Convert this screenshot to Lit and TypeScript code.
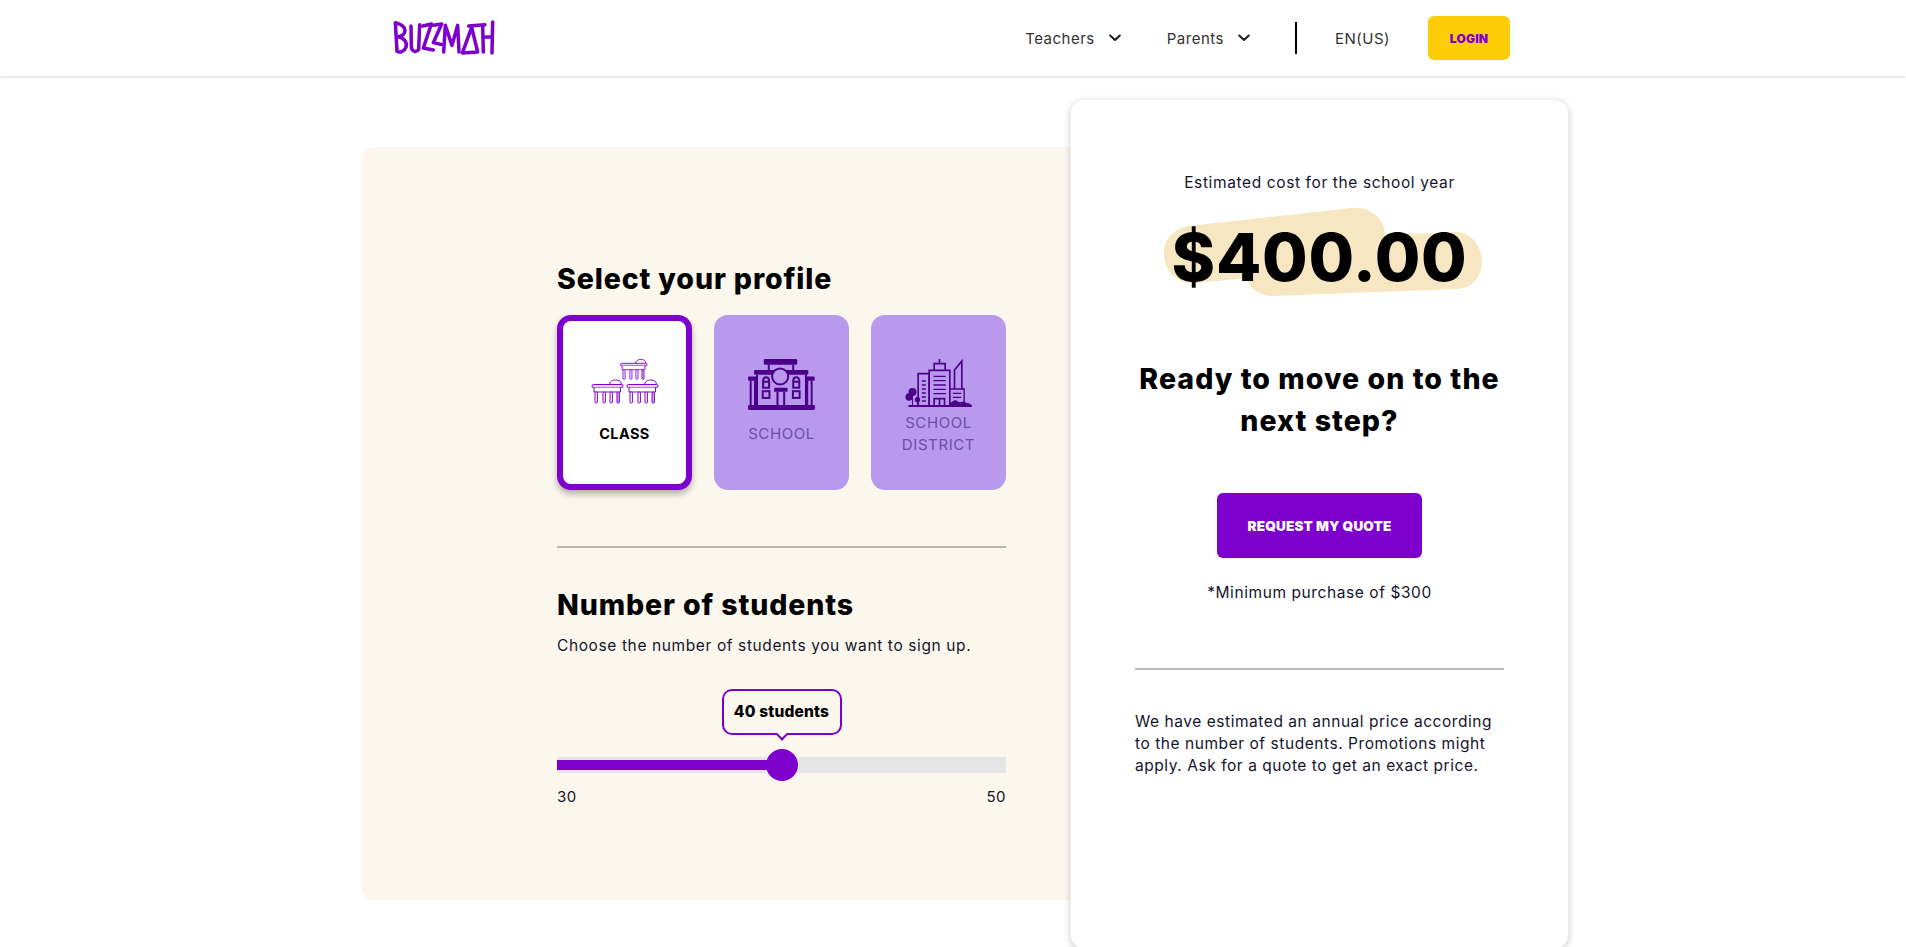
import { LitElement, html, css, svg } from 'lit'
import { customElement, property, state } from 'lit/decorators.js'

const desk = (x: number, y: number, s = 1) => svg`
  <g transform="translate(${x} ${y}) scale(${s})">
    <path d="M18 6 C18 2 21 .5 24 .5 C28 .5 30 2 30 6" fill="#fff"/>
    <rect x=".5" y="5" width="31" height="3" rx="1.5" fill="#e3d2f3"/>
    <path d="M2.5 8 V12.5 H29 V8" fill="#fff"/>
    <rect x="3.5" y="12.5" width="2.4" height="11" rx="1" fill="#fff"/>
    <rect x="11.5" y="12.5" width="2.4" height="11" rx="1" fill="#fff"/>
    <rect x="18.5" y="12.5" width="2.4" height="11" rx="1" fill="#fff"/>
    <rect x="25.5" y="12.5" width="2.4" height="11" rx="1" fill="#cdb0ea"/>
  </g>
`

const classIcon = html`
  <svg width="68" height="45" viewBox="0 0 68 45" fill="none" stroke="#7e00cc" stroke-width="1">
    ${desk(29, 0, 0.86)} ${desk(0.5, 20.5)} ${desk(35.5, 20.5)}
  </svg>
`

const schoolIcon = html`
  <svg width="67" height="51" viewBox="0 0 200 152" fill="none" stroke="#4b0087" stroke-width="6">
    <g fill="#4b0087" stroke="none">
      <rect x="47" y="0" width="100" height="17" rx="4"/>
      <rect x="18" y="33" width="162" height="14" rx="4"/>
      <rect x="0" y="52" width="26" height="13" rx="3"/>
      <rect x="173" y="52" width="26" height="13" rx="3"/>
      <rect x="78" y="86" width="40" height="12" rx="2"/>
      <rect x="0" y="137" width="200" height="15" rx="4"/>
    </g>
    <path d="M62 17 V33 M135 17 V33"/>
    <path d="M8 65 V137 M21 65 V137 M177 65 V137 M190 65 V137"/>
    <path d="M27 47 V137 M173 47 V137"/>
    <circle cx="96" cy="52" r="24" fill="#b999ee"/>
    <path d="M45 86 V66 C45 50 63 50 63 66 V86 Z M135 86 V66 C135 50 153 50 153 66 V86 Z M42 68 H66 M132 68 H156"/>
    <rect x="44" y="96" width="20" height="20"/>
    <rect x="134" y="96" width="20" height="20"/>
    <path d="M88 98 V137 M108 98 V137"/>
  </svg>
`

const districtIcon = html`
  <svg width="67" height="48" viewBox="0 0 200 144" fill="none" stroke="#4b0087" stroke-width="5">
    <path d="M10 141 H200" stroke-width="6"/>
    <path d="M72 141 V44 H39 V141"/>
    <path d="M50 66 H62 M50 78 H62 M50 90 H62 M50 102 H62 M50 114 H62 M50 126 H62" stroke-width="4"/>
    <path d="M72 34 H134 V141 H72 Z M87 32 V14 H120 V32 M103 14 V0"/>
    <path d="M85 52 H122 M85 65 H122 M85 78 H122 M85 91 H122 M85 104 H122" stroke-width="4"/>
    <path d="M87 141 V119 H118 V141 M103 119 V141"/>
    <path d="M148 90 V33 L170 6 V90"/>
    <path d="M134 90 H177 V130 M143 103 H168 M143 115 H168" stroke-width="4"/>
    <g fill="#4b0087" stroke="none">
      <circle cx="22" cy="99" r="12"/>
      <circle cx="12" cy="114" r="11"/>
      <circle cx="37" cy="122" r="8"/>
      <path d="M130 141 C134 130 142 128 148 124 C154 122 158 130 166 130 C176 124 180 130 184 132 C192 132 198 136 200 141 Z"/>
    </g>
    <path d="M22 108 V141 M37 128 V141" stroke-width="3"/>
  </svg>
`

const chevron = html`
  <svg class="chevron" width="12" height="8" viewBox="0 0 12 8" fill="none" stroke="#1c1c1c" stroke-width="2" stroke-linecap="round" stroke-linejoin="round">
    <path d="M1.2 1.5 L6 6 L10.8 1.5"/>
  </svg>
`

@customElement('app-root')
export class AppRoot extends LitElement {
  @property({ type: Number }) students = 40

  @state()
  private profile = 'class'

  static styles = css`
    :host {
      display: block;
      height: 947px;
      overflow: hidden;
      background: #fff;
      color: #14142b;
      font-family: Inter, "Liberation Sans", sans-serif;
      font-size: 15.5px;
    }

    .header {
      height: 76px;
      display: flex;
      align-items: center;
      padding: 0 396px 0 390px;
      box-shadow: 0 1px 3px rgba(0,0,0,0.16);
    }

    .logo {
      display: block;
      margin-top: -3px;
    }

    .nav {
      margin-left: auto;
      display: flex;
      align-items: center;
      color: #333;
      font-size: 15px;
      letter-spacing: 0.5px;
    }

    .nav-item {
      display: flex;
      align-items: center;
      gap: 14px;
      margin-right: 46px;
    }

    .nav-rule {
      width: 2px;
      height: 32px;
      background: #000;
      margin: 0 38px 0 -1px;
    }

    .login {
      margin-left: 38px;
      width: 82px;
      height: 44px;
      border: none;
      border-radius: 6px;
      background: #ffcc08;
      color: #7e00cc;
      font: 900 12px Inter, sans-serif;
      letter-spacing: 0.2px;
    }

    .main {
      display: flex;
      align-items: flex-start;
      padding-left: 362px;
    }

    .panel {
      width: 720px;
      height: 753px;
      margin: 71px -12px 0 0;
      box-sizing: border-box;
      padding: 115px 0 0 195px;
      background: #fbf7ed;
      border-radius: 12px;
    }

    .panel-body {
      width: 449px;
    }

    h2 {
      margin: 0;
      color: #000;
      font-size: 28.5px;
      line-height: 34px;
      font-weight: 800;
      letter-spacing: 0.88px;
    }

    .cards {
      display: flex;
      gap: 22px;
      margin-top: 19px;
    }

    .profile {
      width: 135px;
      height: 175px;
      box-sizing: border-box;
      padding-top: 44px;
      border-radius: 14px;
      background: #b999ee;
      color: #6f4ea3;
      display: flex;
      flex-direction: column;
      align-items: center;
      cursor: pointer;
    }

    .profile.active {
      padding-top: 38px;
      border: 6px solid #7e00cc;
      background: #fff;
      color: #000;
      font-weight: 700;
      box-shadow: 0 4px 6px rgba(0,0,0,0.3);
    }

    .icon {
      height: 52px;
    }

    .label {
      max-width: 100px;
      height: 46px;
      display: flex;
      align-items: center;
      text-align: center;
      font-size: 15px;
      line-height: 22px;
      letter-spacing: 0.6px;
    }

    .profile.active .label {
      font-size: 14.5px;
      letter-spacing: 0.4px;
    }

    .rule {
      height: 2px;
      margin-top: 56px;
      background: #bcb8a8;
    }

    .students {
      margin-top: 40px;
    }

    .hint {
      margin: 12px 0 0;
      line-height: 24px;
      letter-spacing: 0.61px;
    }

    .slider {
      position: relative;
      margin-top: 31px;
      padding-top: 68px;
    }

    .track {
      position: relative;
      height: 16px;
      background: #e5e5e5;
      display: flex;
      align-items: center;
    }

    .fill {
      height: 10px;
      background: #7e00cc;
    }

    .thumb {
      position: absolute;
      top: -8px;
      width: 32px;
      height: 32px;
      border-radius: 50%;
      background: #7e00cc;
      transform: translateX(-50%);
    }

    .tip {
      position: absolute;
      top: 0;
      width: 120px;
      height: 46px;
      box-sizing: border-box;
      border: 2px solid #7e00cc;
      border-radius: 10px;
      background: #fbf7ed;
      color: #000;
      font-size: 15.5px;
      font-weight: 800;
      letter-spacing: 0.2px;
      line-height: 42px;
      text-align: center;
      transform: translateX(-50%);
    }

    .tip::after {
      content: '';
      position: absolute;
      left: 50%;
      bottom: -6px;
      width: 8px;
      height: 8px;
      box-sizing: border-box;
      border-right: 2px solid #7e00cc;
      border-bottom: 2px solid #7e00cc;
      background: #fbf7ed;
      transform: translateX(-50%) rotate(45deg);
    }

    .scale {
      display: flex;
      justify-content: space-between;
      margin-top: 14px;
      font-size: 15px;
      line-height: 20px;
      letter-spacing: 0.5px;
    }

    .summary {
      position: relative;
      width: 499px;
      height: 850px;
      box-sizing: border-box;
      margin-top: 23px;
      padding: 71px 64px 0;
      background: #fff;
      border: 1px solid #eee;
      border-radius: 14px;
      box-shadow: 0 2px 6px rgba(0,0,0,0.2);
      text-align: center;
    }

    .estimate {
      line-height: 24px;
      letter-spacing: 0.62px;
    }

    .price {
      position: relative;
      margin-top: 14px;
      height: 90px;
      color: #000;
      font-size: 66px;
      line-height: 96px;
      font-weight: 800;
      letter-spacing: 0.7px;
    }

    .price svg {
      position: absolute;
      left: 24px;
      top: -4px;
    }

    .price span {
      position: relative;
    }

    .next {
      margin: 59px 0 0;
      color: #000;
      font-size: 28.5px;
      line-height: 42px;
      font-weight: 800;
      letter-spacing: 1.05px;
    }

    .quote {
      display: block;
      width: 205px;
      height: 65px;
      margin: 51px auto 0;
      border: none;
      border-radius: 6px;
      background: #7e00cc;
      color: #fff;
      font: 900 13.5px Inter, sans-serif;
      letter-spacing: 0.2px;
      cursor: pointer;
    }

    .minimum {
      margin: 23px 0 0;
      line-height: 24px;
      letter-spacing: 0.58px;
    }

    .summary-rule {
      height: 2px;
      margin-top: 63px;
      background: #b8b8b8;
    }

    .note {
      margin: 41px 0 0;
      line-height: 22px;
      letter-spacing: 0.55px;
      text-align: left;
    }
  `

  render() {
    const pct = ((this.students - 30) / 20) * 100
    return html`
      <header class="header">
        <svg class="logo" width="108" height="38" viewBox="60 50 324 114" fill="none" stroke="#7e00cc" stroke-width="10.5" stroke-linecap="round" stroke-linejoin="round">
          <path d="M76 64 L81 150 M76 64 C98 70 108 80 104 93 C100 103 90 105 84 106 C104 110 112 124 108 138 C102 151 90 155 81 150"/>
          <path d="M123 74 L124 136 C125 152 140 154 146 144 L149 70"/>
          <path d="M158 74 L184 68 L160 140 L190 146"/>
          <path d="M190 72 L215 68 L190 124 L216 130"/>
          <path d="M221 152 L226 72 L246 132 L263 72 L267 152"/>
          <path d="M277 155 L305 78 L323 152 Z"/>
          <path d="M296 74 L345 70"/>
          <path d="M338 72 L340 152 M368 62 L366 155 M338 108 L366 106"/>
        </svg>
        <nav class="nav">
          <div class="nav-item">Teachers ${chevron}</div>
          <div class="nav-item">Parents ${chevron}</div>
          <div class="nav-rule"></div>
          <div>EN(US)</div>
          <button class="login">LOGIN</button>
        </nav>
      </header>
      <main class="main">
        <section class="panel">
          <div class="panel-body">
            <h2>Select your profile</h2>
            <div class="cards">
              ${this.renderProfile('class', 'CLASS', classIcon)}
              ${this.renderProfile('school', 'SCHOOL', schoolIcon)}
              ${this.renderProfile('district', 'SCHOOL DISTRICT', districtIcon)}
            </div>
            <div class="rule"></div>
            <h2 class="students">Number of students</h2>
            <p class="hint">Choose the number of students you want to sign up.</p>
            <div class="slider">
              <div class="tip" style="left: ${pct}%">${this.students} students</div>
              <div class="track">
                <div class="fill" style="width: ${pct}%"></div>
                <div class="thumb" style="left: ${pct}%"></div>
              </div>
            </div>
            <div class="scale"><span>30</span><span>50</span></div>
          </div>
        </section>
        <aside class="summary">
          <div class="estimate">Estimated cost for the school year</div>
          <div class="price">
            <svg width="326" height="94" viewBox="0 0 326 94">
              <path fill="#f6e6c2" d="M5 48 C5 33 16 23 30 21 L193 3 C211 1 226 14 226 30 L297 27 C312 27 323 41 323 57 C323 72 312 84 297 84 L113 91 C101 91 91 84 87 73 L37 78 C19 80 5 66 5 48 Z"/>
            </svg>
            <span>$400.00</span>
          </div>
          <h3 class="next">Ready to move on to the next step?</h3>
          <button class="quote">REQUEST MY QUOTE</button>
          <p class="minimum">*Minimum purchase of $300</p>
          <div class="summary-rule"></div>
          <p class="note">We have estimated an annual price according to the number of students. Promotions might apply. Ask for a quote to get an exact price.</p>
        </aside>
      </main>
    `
  }

  private renderProfile(id: string, label: string, icon: unknown) {
    return html`
      <div class="profile ${this.profile === id ? 'active' : ''}" @click=${() => (this.profile = id)}>
        <div class="icon">${icon}</div>
        <div class="label">${label}</div>
      </div>
    `
  }
}

declare global {
  interface HTMLElementTagNameMap {
    'app-root': AppRoot
  }
}
